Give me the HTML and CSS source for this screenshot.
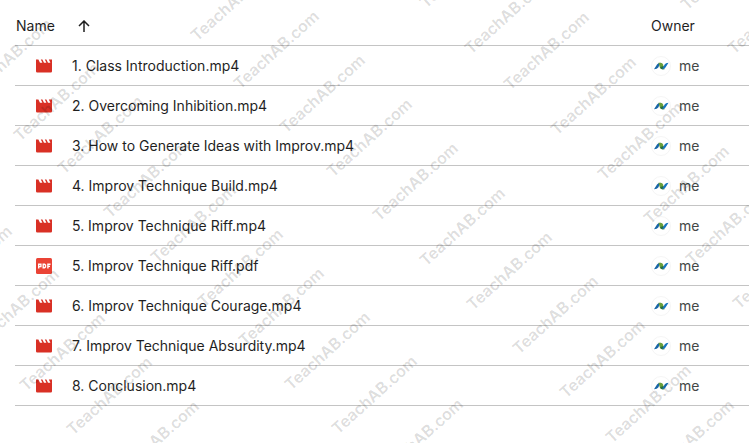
FILE: index.html
```
<!DOCTYPE html>
<html lang="en">
<head>
  <meta charset="UTF-8" />
  <meta name="viewport" content="width=device-width, initial-scale=1.0"/>
  <title>Files</title>
  <link rel="stylesheet" href="styles.css">
</head>
<body>
  <svg class="sprite" aria-hidden="true">
    <symbol id="video" viewBox="2 2 20 20">
      <path fill="#d93025" d="M18 4l2 4h-3l-2-4h-2l2 4h-3l-2-4H8l2 4H7L5 4H2v14.500q0 1.500 1.500 1.500h17q1.500 0 1.500-1.500V4z"/>
    </symbol>
    <symbol id="pdf" viewBox="0 0 16 16">
      <rect width="16" height="16" rx="1.500" fill="#ea4335"/>
      <path fill="none" stroke="#fff" stroke-width="1.400" d="M2.700 10.500V6.200H4.900V8.600H2.700M7.200 6.200V9.800H8.600L9.500 9V7L8.600 6.200zM11.900 10.500V6.200H14.500M11.900 8.400H14"/>
    </symbol>
    <symbol id="avatar" viewBox="0 0 20 20">
      <circle cx="10" cy="10" r="9.500" fill="#fff" stroke="#f5f5f5"/>
      <path fill="#1765a8" d="M3 13.300L6 8.400Q7 6.700 9.500 6.700L7.300 11.500Q6.200 13.300 3 13.300z"/>
      <path fill="#6a9f3a" d="M7.500 6.700h2q2.100 0 2.600 1.800l1.300 4.800h-2q-2.200 0-2.600-1.800z"/>
      <path fill="#28703f" d="M9.300 11l3.200-1 .9 3.300h-2.100q-1.500 0-1.800-1.200z"/>
      <path fill="#1876c0" d="M11.200 13.300l2.400-4.900Q14.600 6.700 17.500 6.700l-3 4.800Q13.400 13.300 11.200 13.300z"/>
    </symbol>
  </svg>

  <main class="files">
    <table>
      <thead>
        <tr>
          <th scope="col" aria-sort="ascending">
            <button type="button" class="sort">Name
              <svg class="arrow" viewBox="0 0 12 12" aria-hidden="true"><path d="M6 12V1M1 6l5-5 5 5"/></svg>
            </button>
          </th>
          <th scope="col" class="owner">Owner</th>
        </tr>
      </thead>
      <tbody id="rows"></tbody>
    </table>
  </main>

  <svg class="watermark" id="watermark" aria-hidden="true"></svg>

  <script src="script.js"></script>
</body>
</html>
```
FILE: styles.css
```
body {
  font-family: Inter, Roboto, sans-serif;
  font-size: 14px;
  line-height: 20px;
  background: #fff;
  color: #1f1f1f;
  margin: 0;
  position: relative;
  min-height: 100vh;
  overflow: hidden;
}

.sprite {
  display: none;
}

.files {
  padding-left: 15px;
}

table {
  width: 100%;
  border-collapse: separate;
  border-spacing: 0;
}

th, td {
  height: 39px;
  padding: 0;
  border-bottom: 1px solid #c4c4c4;
  text-align: left;
  font-weight: 400;
}

th {
  height: 20px;
  padding: 16px 0 9px;
}

th:first-child {
  padding-left: 1px;
}

.owner {
  width: 98px;
}

.sort {
  display: flex;
  align-items: center;
  gap: 23px;
  padding: 0;
  border: none;
  background: none;
  color: inherit;
  font: inherit;
  cursor: pointer;
}

.arrow {
  width: 12px;
  height: 12px;
  fill: none;
  stroke: #1f1f1f;
  stroke-width: 1.5;
}

.file, .user {
  display: flex;
  align-items: center;
}

.file {
  gap: 20px;
  padding-left: 21px;
}

.file svg {
  width: 16px;
  height: 16px;
}

.user {
  gap: 8px;
  color: #444746;
}

.user svg {
  width: 20px;
  height: 20px;
}

.watermark {
  position: absolute;
  inset: 0;
  width: 100%;
  height: 100%;
  pointer-events: none;
}

.watermark text {
  font-family: Inter, sans-serif;
  font-size: 16px;
  font-weight: 600;
  fill: #000;
  fill-opacity: 0.14;
}
```
FILE: script.js
```
const files = [
  '1. Class Introduction.mp4',
  '2. Overcoming Inhibition.mp4',
  '3. How to Generate Ideas with Improv.mp4',
  '4. Improv Technique Build.mp4',
  '5. Improv Technique Riff.mp4',
  '5. Improv Technique Riff.pdf',
  '6. Improv Technique Courage.mp4',
  '7. Improv Technique Absurdity.mp4',
  '8. Conclusion.mp4'
];

document.getElementById('rows').innerHTML = files.map(name => {
  const icon = name.endsWith('.pdf') ? 'pdf' : 'video';
  return `<tr>
    <td><div class="file"><svg><use href="#${icon}"/></svg>${name}</div></td>
    <td><div class="user"><svg><use href="#avatar"/></svg>me</div></td>
  </tr>`;
}).join('');

// start of each watermark line
const marks = [
  [-27, 98], [20, 142], [64, 175], [110, 219], [157, 264], [204, 308],
  [245, 347], [291, 391], [338, 435], [384, 478],
  [197, 42], [240, 90], [286, 134], [333, 178], [379, 222], [426, 267],
  [473, 311], [519, 355], [566, 399], [612, 444], [655, 479],
  [426, 9], [471, 55], [510, 91], [557, 136], [604, 181], [650, 225],
  [692, 266], [739, 310], [687, 11], [734, 55],
  [-67, 305], [-20, 348], [26, 392], [73, 436], [120, 480], [426, 520]
];

document.getElementById('watermark').innerHTML = marks.map(([x, y]) =>
  `<text transform="translate(${x} ${y}) rotate(-42)">TeachAB.com</text>`
).join('');
```
